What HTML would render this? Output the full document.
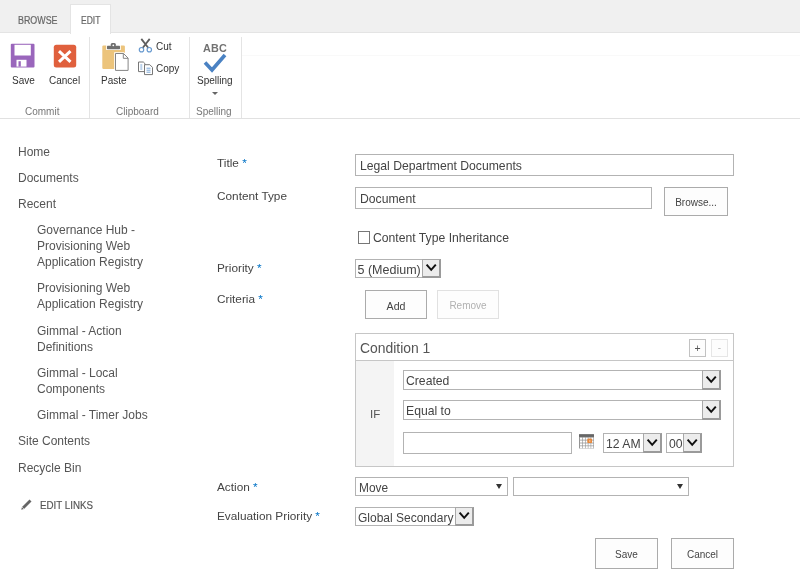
<!DOCTYPE html>
<html><head><meta charset="utf-8">
<style>
*{margin:0;padding:0;box-sizing:border-box}
html,body{width:800px;height:588px;overflow:hidden;background:#fff}
body{position:relative;font-family:"Liberation Sans",sans-serif;color:#444;will-change:transform}
.a{position:absolute}
.t{position:absolute;white-space:nowrap;line-height:1}
.nav{color:#555}
.star{color:#0072c6}
.box{position:absolute;border:1px solid #b3b3b3;background:#fff}
.btn{position:absolute;border:1px solid #ababab;background:#fdfdfd;font-size:10px;color:#444;text-align:center}
.dd{position:absolute;top:-1px;bottom:-1px;right:-1px;background:#ececec;border:1px solid #a8a8a8;border-right:2px solid #9a9a9a;border-bottom:2px solid #9a9a9a}
.dd svg{position:absolute;left:0;top:50%;margin-top:-8px}
</style></head><body>

<!-- tab bar -->
<div class="a" style="left:0;top:0;width:800px;height:33px;background:#f0f0f0;border-bottom:1px solid #e4e4e4"></div>
<div class="a" style="left:70px;top:4px;width:41px;height:30px;background:#fff;border:1px solid #e4e4e4;border-bottom:none"></div>
<div class="t" style="left:18px;top:16px;font-size:10px;color:#666;transform-origin:0 0;transform:scaleX(0.89);-webkit-text-stroke:0.2px #666">BROWSE</div>
<div class="t" style="left:81px;top:16px;font-size:10px;color:#666;transform-origin:0 0;transform:scaleX(0.85);-webkit-text-stroke:0.2px #666">EDIT</div>

<!-- ribbon body -->
<div class="a" style="left:0;top:118px;width:800px;height:1px;background:#e1e1e1"></div>
<div class="a" style="left:89px;top:37px;width:1px;height:81px;background:#e4e4e4"></div>
<div class="a" style="left:189px;top:37px;width:1px;height:81px;background:#e4e4e4"></div>
<div class="a" style="left:241px;top:37px;width:1px;height:81px;background:#e4e4e4"></div>
<div class="a" style="left:242px;top:55px;width:558px;height:1px;background:#f9f9f9"></div>

<!-- save icon -->
<svg class="a" style="left:10px;top:43px" width="25" height="25" viewBox="0 0 25 25">
<rect x="0.8" y="0.8" width="23.7" height="23.7" rx="1" fill="#9a66bc"/>
<rect x="4.5" y="1.8" width="16.3" height="10.7" fill="#fff"/>
<rect x="6.5" y="16.8" width="10" height="6.8" fill="#fff"/>
<rect x="8.5" y="18.2" width="2.3" height="5.4" fill="#9a66bc"/>
</svg>
<!-- cancel icon -->
<svg class="a" style="left:53px;top:44px" width="24" height="24" viewBox="0 0 24 24">
<rect x="0.8" y="0.8" width="22.4" height="22.7" rx="2.5" fill="#e0603d"/>
<path d="M6 7.2L17.5 17.8M17.5 7.2L6 17.8" stroke="#fff" stroke-width="3"/>
</svg>
<div class="t" style="left:12px;top:76px;font-size:10px;color:#333">Save</div>
<div class="t" style="left:49px;top:76px;font-size:10px;color:#333">Cancel</div>
<div class="t" style="left:25px;top:107px;font-size:10px;color:#777">Commit</div>

<!-- paste icon -->
<svg class="a" style="left:98px;top:40px" width="34" height="34" viewBox="0 0 34 34">
<rect x="4.3" y="5.5" width="22.6" height="23.4" rx="1.2" fill="#ecc47c"/>
<rect x="8.2" y="5" width="14.6" height="5" fill="#fff"/>
<rect x="9" y="5.8" width="13" height="3.4" rx="0.6" fill="#6e6e6e"/>
<rect x="12.7" y="2.9" width="5.2" height="3.5" rx="1.5" fill="#6e6e6e"/>
<circle cx="15.3" cy="5.3" r="0.9" fill="#fff"/>
<path d="M16.2 12.2H26L31.4 17.6V31.7H16.2Z" fill="#fff"/>
<path d="M17.5 13.5H25.5L30.1 18.1V30.4H17.5Z" fill="#fff" stroke="#858585" stroke-width="1"/>
<path d="M25.3 13.5V18.3H30.1" fill="none" stroke="#858585" stroke-width="1"/>
</svg>
<div class="t" style="left:101px;top:76px;font-size:10px;color:#333">Paste</div>
<!-- cut icon -->
<svg class="a" style="left:134px;top:34px" width="24" height="44" viewBox="0 0 24 44">
<path d="M7.3 4.9L14.6 14.2M15.7 4.9L8.4 14.2" stroke="#5e5e5e" stroke-width="1.8"/>
<circle cx="7.5" cy="15.7" r="2.2" fill="#fff" stroke="#6a9bd0" stroke-width="1.2"/>
<circle cx="15.3" cy="15.7" r="2.2" fill="#fff" stroke="#6a9bd0" stroke-width="1.2"/>
<path d="M4.5 28H9.3L11 29.7V37.6H4.5Z" fill="#fff" stroke="#777" stroke-width="1"/>
<path d="M10.5 30.7H15.8L18.5 33.4V40.6H10.5Z" fill="#fff" stroke="#777" stroke-width="1"/>
<path d="M6.3 31H8.3M6.3 33H8.3M6.3 35H8.3M12.5 34.2H16.5M12.5 36.2H16.5M12.5 38.2H16.5" stroke="#6a9bd0" stroke-width="0.9"/>
</svg>
<div class="t" style="left:156px;top:42px;font-size:10px;color:#333">Cut</div>
<div class="t" style="left:156px;top:64px;font-size:10px;color:#333">Copy</div>
<div class="t" style="left:116px;top:107px;font-size:10px;color:#777">Clipboard</div>

<!-- spelling -->
<div class="t" style="left:203px;top:42.5px;font-size:10.8px;font-weight:bold;color:#727272;letter-spacing:0.2px">ABC</div>
<svg class="a" style="left:202px;top:52px" width="25" height="21" viewBox="0 0 25 21">
<path d="M3 10.5L10 18L23 3" fill="none" stroke="#4a82c3" stroke-width="3.6"/>
</svg>
<div class="t" style="left:197px;top:76px;font-size:10px;color:#333">Spelling</div>
<svg class="a" style="left:212px;top:92px" width="6" height="3" viewBox="0 0 6 3"><path d="M0 0H6L3 3Z" fill="#666"/></svg>
<div class="t" style="left:196px;top:107px;font-size:10px;color:#777">Spelling</div>

<!-- left nav -->
<div class="t" style="left:18px;top:146px;font-size:12px;color:#555">Home</div>
<div class="t" style="left:18px;top:172px;font-size:12px;color:#555">Documents</div>
<div class="t" style="left:18px;top:198px;font-size:12px;color:#555">Recent</div>
<div class="t" style="left:37px;top:221.5px;font-size:12px;line-height:16.4px;color:#555">Governance Hub -<br>Provisioning Web<br>Application Registry</div>
<div class="t" style="left:37px;top:280px;font-size:12px;line-height:16.4px;color:#555">Provisioning Web<br>Application Registry</div>
<div class="t" style="left:37px;top:323px;font-size:12px;line-height:16.4px;color:#555">Gimmal - Action<br>Definitions</div>
<div class="t" style="left:37px;top:365px;font-size:12px;line-height:16.4px;color:#555">Gimmal - Local<br>Components</div>
<div class="t" style="left:37px;top:409px;font-size:12px;color:#555">Gimmal - Timer Jobs</div>
<div class="t" style="left:18px;top:435px;font-size:12px;color:#555">Site Contents</div>
<div class="t" style="left:18px;top:462px;font-size:12px;color:#555">Recycle Bin</div>
<svg class="a" style="left:20px;top:498px" width="13" height="13" viewBox="0 0 13 13">
<path d="M1.2 11.8L2 9L9.5 1.5L11.5 3.5L4 11Z" fill="#666"/><path d="M2 9L4 11" stroke="#fff" stroke-width="0.6"/>
</svg>
<div class="t" style="left:39.5px;top:500px;font-size:10.5px;color:#555;transform-origin:0 0;transform:scaleX(0.93);-webkit-text-stroke:0.15px #555">EDIT LINKS</div>

<!-- form labels -->
<div class="t" style="left:217px;top:158px;font-size:11.8px">Title <span class="star">*</span></div>
<div class="t" style="left:217px;top:191px;font-size:11.8px">Content Type</div>
<div class="t" style="left:217px;top:263px;font-size:11.8px">Priority <span class="star">*</span></div>
<div class="t" style="left:217px;top:294px;font-size:11.8px">Criteria <span class="star">*</span></div>
<div class="t" style="left:217px;top:482px;font-size:11.8px">Action <span class="star">*</span></div>
<div class="t" style="left:217px;top:511px;font-size:11.8px">Evaluation Priority <span class="star">*</span></div>

<!-- title input -->
<div class="box" style="left:355px;top:154px;width:379px;height:22px"></div>
<div class="t" style="left:360px;top:160px;font-size:12.2px">Legal Department Documents</div>
<!-- content type -->
<div class="box" style="left:355px;top:187px;width:297px;height:22px"></div>
<div class="t" style="left:360px;top:193px;font-size:12.2px">Document</div>
<div class="btn" style="left:664px;top:187px;width:64px;height:29px;line-height:29px">Browse...</div>
<!-- checkbox -->
<div class="a" style="left:358px;top:231px;width:12px;height:13px;border:1px solid #777;background:#fff"></div>
<div class="t" style="left:373px;top:232px;font-size:12.2px">Content Type Inheritance</div>

<!-- priority select -->
<div class="box" style="left:355px;top:259px;width:86px;height:19px">
 <div class="dd" style="width:19px"><svg width="16" height="16" viewBox="0 0 16 16"><path d="M3.6 4.6L8.2 9.8L12.8 4.6" fill="none" stroke="#111" stroke-width="2"/></svg></div>
</div>
<div class="t" style="left:357.5px;top:264px;font-size:12.5px">5 (Medium)</div>

<!-- add/remove -->
<div class="btn" style="left:365px;top:290px;width:62px;height:29px;line-height:30px;font-size:10.6px">Add</div>
<div class="btn" style="left:437px;top:290px;width:62px;height:29px;line-height:30px;border-color:#e1e1e1;color:#b1b1b1">Remove</div>

<!-- condition box -->
<div class="a" style="left:355px;top:333px;width:379px;height:134px;border:1px solid #c6c6c6"></div>
<div class="a" style="left:356px;top:360px;width:377px;height:1px;background:#c6c6c6"></div>
<div class="a" style="left:356px;top:361px;width:38px;height:105px;background:#f4f4f4"></div>
<div class="t" style="left:360px;top:342px;font-size:13.9px;color:#555">Condition 1</div>
<div class="btn" style="left:689px;top:339px;width:17px;height:18px;line-height:16px;font-size:10.5px;color:#555;border-color:#c2c2c2">+</div>
<div class="btn" style="left:711px;top:339px;width:17px;height:18px;line-height:16px;font-size:10px;color:#bbb;border-color:#e6e6e6">-</div>
<div class="t" style="left:370px;top:409px;font-size:11.5px;color:#555">IF</div>

<div class="box" style="left:403px;top:370px;width:318px;height:20px">
 <div class="dd" style="width:19px"><svg width="16" height="16" viewBox="0 0 16 16"><path d="M3.6 4.6L8.2 9.8L12.8 4.6" fill="none" stroke="#111" stroke-width="2"/></svg></div>
</div>
<div class="t" style="left:406px;top:375px;font-size:12.2px">Created</div>
<div class="box" style="left:403px;top:400px;width:318px;height:20px">
 <div class="dd" style="width:19px"><svg width="16" height="16" viewBox="0 0 16 16"><path d="M3.6 4.6L8.2 9.8L12.8 4.6" fill="none" stroke="#111" stroke-width="2"/></svg></div>
</div>
<div class="t" style="left:406px;top:405px;font-size:12.2px">Equal to</div>

<div class="box" style="left:403px;top:432px;width:169px;height:22px"></div>
<svg class="a" style="left:579px;top:434px" width="15" height="15" viewBox="0 0 15 15">
<rect x="0" y="0.3" width="15" height="14.3" rx="0.6" fill="#959595"/>
<rect x="0" y="0.3" width="15" height="2.6" fill="#666"/>
<rect x="1.0" y="3.6" width="2.2" height="2.1" fill="#fff"/><rect x="1.0" y="6.5" width="2.2" height="2.1" fill="#fff"/><rect x="1.0" y="9.4" width="2.2" height="2.1" fill="#fff"/><rect x="1.0" y="12.2" width="2.2" height="2.1" fill="#fff"/><rect x="3.8" y="3.6" width="2.2" height="2.1" fill="#fff"/><rect x="3.8" y="6.5" width="2.2" height="2.1" fill="#fff"/><rect x="3.8" y="9.4" width="2.2" height="2.1" fill="#fff"/><rect x="3.8" y="12.2" width="2.2" height="2.1" fill="#fff"/><rect x="6.6" y="3.6" width="2.2" height="2.1" fill="#fff"/><rect x="6.6" y="6.5" width="2.2" height="2.1" fill="#fff"/><rect x="6.6" y="9.4" width="2.2" height="2.1" fill="#fff"/><rect x="6.6" y="12.2" width="2.2" height="2.1" fill="#fff"/><rect x="9.4" y="3.6" width="2.2" height="2.1" fill="#fff"/><rect x="9.4" y="6.5" width="2.2" height="2.1" fill="#fff"/><rect x="9.4" y="9.4" width="2.2" height="2.1" fill="#fff"/><rect x="9.4" y="12.2" width="2.2" height="2.1" fill="#fff"/><rect x="12.2" y="3.6" width="2.2" height="2.1" fill="#fff"/><rect x="12.2" y="6.5" width="2.2" height="2.1" fill="#fff"/><rect x="12.2" y="9.4" width="2.2" height="2.1" fill="#fff"/><rect x="12.2" y="12.2" width="2.2" height="2.1" fill="#fff"/>
<rect x="8.3" y="4.6" width="4.8" height="4.5" rx="1.2" fill="#e8893c"/>
<rect x="10.3" y="6.5" width="1" height="1" fill="#fff"/>
</svg>
<div class="box" style="left:603px;top:433px;width:59px;height:20px">
 <div class="dd" style="width:19px"><svg width="16" height="16" viewBox="0 0 16 16"><path d="M3.6 4.6L8.2 9.8L12.8 4.6" fill="none" stroke="#111" stroke-width="2"/></svg></div>
</div>
<div class="t" style="left:606px;top:438px;font-size:12.2px">12 AM</div>
<div class="box" style="left:666px;top:433px;width:36px;height:20px">
 <div class="dd" style="width:19px"><svg width="16" height="16" viewBox="0 0 16 16"><path d="M3.6 4.6L8.2 9.8L12.8 4.6" fill="none" stroke="#111" stroke-width="2"/></svg></div>
</div>
<div class="t" style="left:669px;top:438px;font-size:12.2px">00</div>

<!-- action selects -->
<div class="box" style="left:355px;top:477px;width:153px;height:19px"></div>
<div class="t" style="left:359px;top:483px;font-size:11.9px">Move</div>
<svg class="a" style="left:496px;top:484px" width="6" height="5" viewBox="0 0 6 5"><path d="M0 0H6L3 5Z" fill="#333"/></svg>
<div class="box" style="left:513px;top:477px;width:176px;height:19px"></div>
<svg class="a" style="left:677px;top:484px" width="6" height="5" viewBox="0 0 6 5"><path d="M0 0H6L3 5Z" fill="#333"/></svg>

<!-- evaluation priority select -->
<div class="box" style="left:355px;top:507px;width:119px;height:19px">
 <div class="dd" style="width:19px"><svg width="16" height="16" viewBox="0 0 16 16"><path d="M3.6 4.6L8.2 9.8L12.8 4.6" fill="none" stroke="#111" stroke-width="2"/></svg></div>
</div>
<div class="t" style="left:358px;top:512px;font-size:12px">Global Secondary</div>

<!-- save/cancel -->
<div class="btn" style="left:595px;top:538px;width:63px;height:31px;line-height:31px">Save</div>
<div class="btn" style="left:671px;top:538px;width:63px;height:31px;line-height:31px">Cancel</div>

</body></html>
